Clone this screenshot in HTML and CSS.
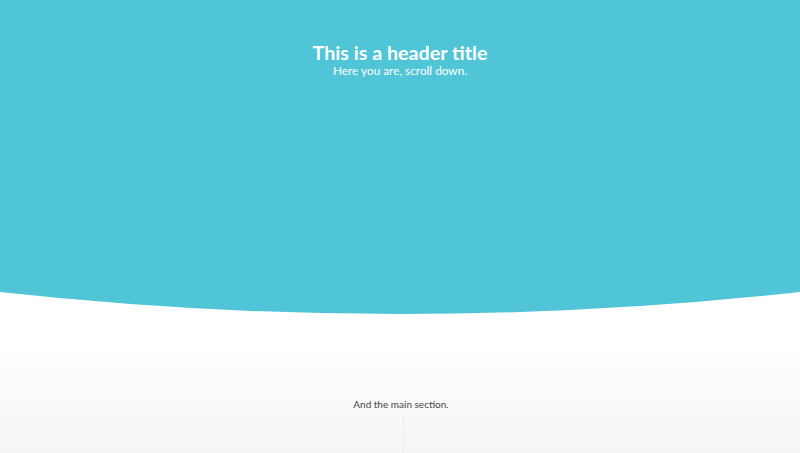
FILE: index.html
```html
<!DOCTYPE html>
<html lang="en">
<head>
<meta charset="utf-8">
<title>Header</title>
<link rel="stylesheet" href="styles.css">
</head>
<body>
<header class="hero">
  <div class="hero-body">
    <h1 class="hero-title">This is a header title</h1>
    <p class="hero-sub">Here you are, scroll down.</p>
  </div>
  <svg class="hero-curve" width="800" height="22" viewBox="0 0 800 22" preserveAspectRatio="none" aria-hidden="true">
    <path d="M0 -1 H800 V0 Q400 44 0 0 Z" fill="#50c5d8"/>
  </svg>
</header>
<main class="main">
  <p class="main-text">And the main section.</p>
  <div class="main-line"></div>
</main>
</body>
</html>
```
FILE: styles.css
```css
html, body {
  margin: 0;
  padding: 0;
  height: 100%;
}
body {
  font-family: Lato, "Open Sans", "Liberation Sans", sans-serif;
  background: linear-gradient(to bottom, #ffffff 0, #ffffff 345px, #f5f5f5 453px);
  overflow: hidden;
}
.hero {
  display: flex;
  flex-direction: column;
}
.hero-body {
  height: 292px;
  background: #50c5d8;
  color: #fff;
  text-align: center;
  padding-top: 43px;
  box-sizing: border-box;
}
.hero-title {
  margin: 0;
  font-size: 19.7px;
  line-height: 20px;
  font-weight: 700;
}
.hero-sub {
  margin: 2px 0 0;
  font-size: 11.8px;
  line-height: 12px;
  font-weight: 400;
}
.hero-curve {
  display: block;
  width: 100%;
  height: 22px;
}
.main {
  display: flex;
  flex-direction: column;
  align-items: center;
  padding-top: 84px;
}
.main-text {
  margin: 0;
  font-size: 10px;
  line-height: 12px;
  color: #444;
  padding-left: 2px;
}
.main-line {
  margin-top: 5px;
  margin-left: 6px;
  height: 40px;
  width: 0;
  border-left: 1px dashed #e2e2e2;
}
```
